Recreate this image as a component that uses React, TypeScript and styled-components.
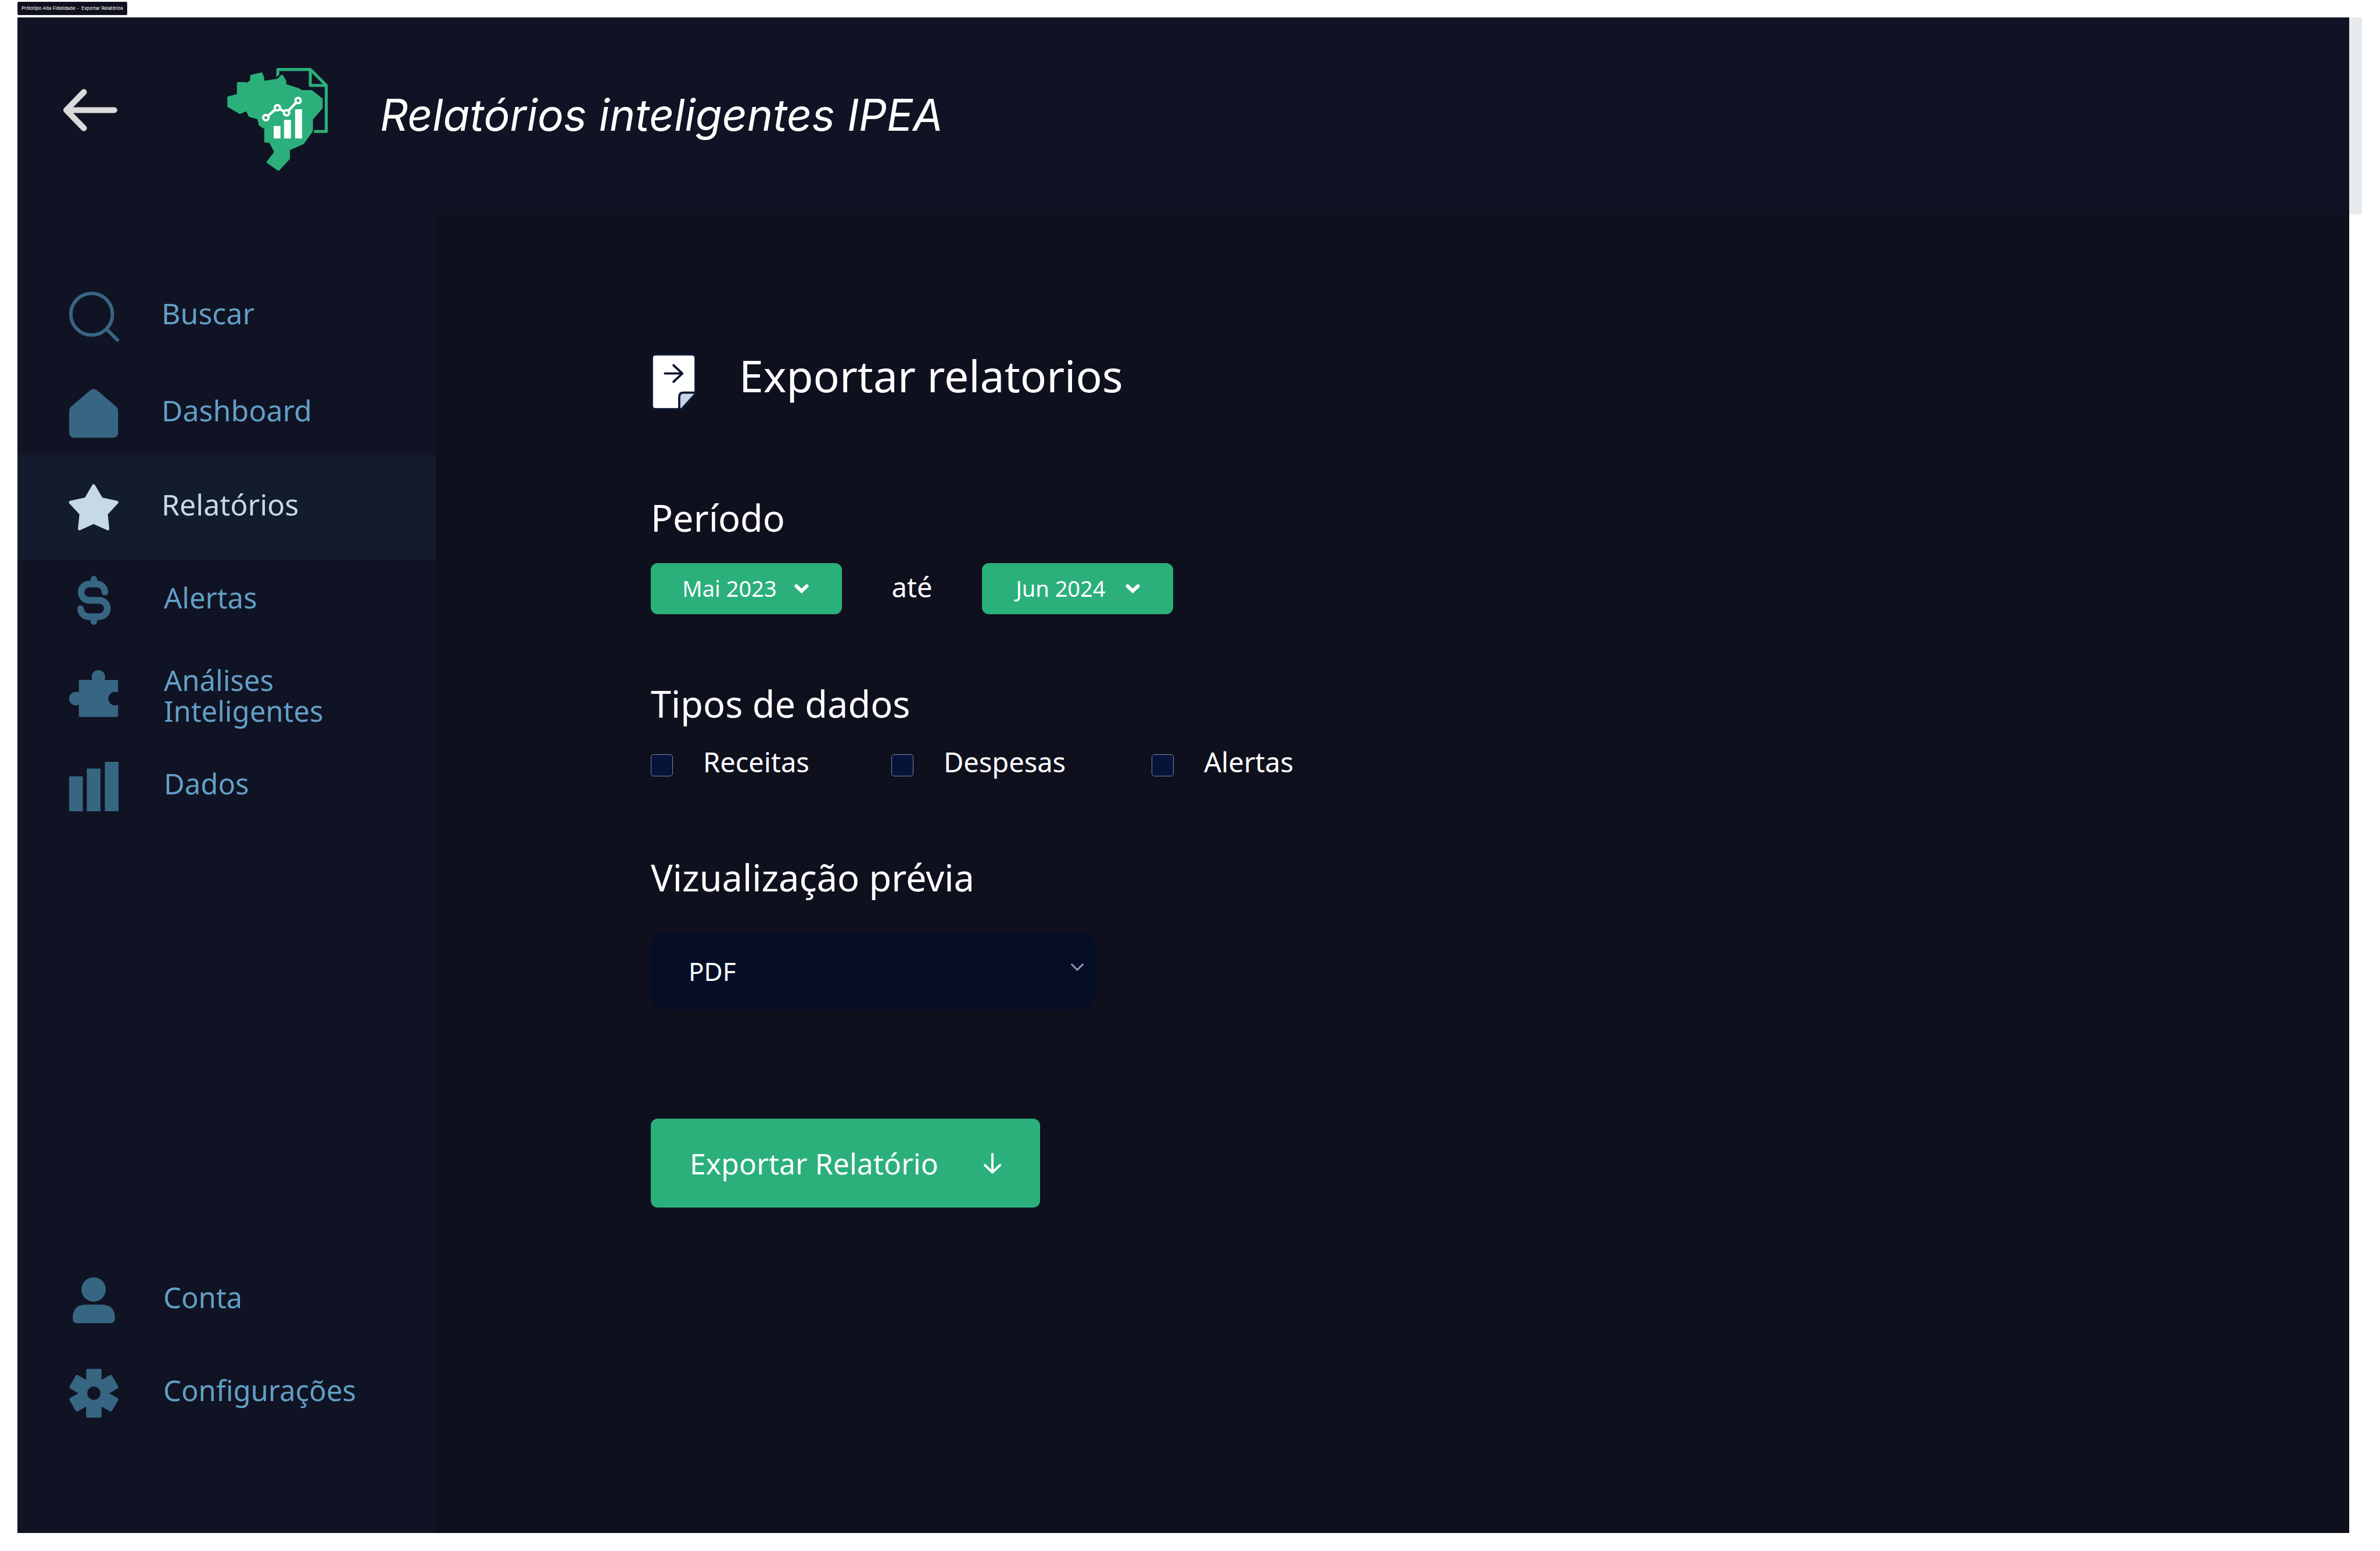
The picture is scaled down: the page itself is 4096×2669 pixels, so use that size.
import React from "react";
import styled, { createGlobalStyle } from "styled-components";

const color = {
  page: "#ffffff",
  main: "#0f101e",
  panel: "#101323",
  active: "#121c2e",
  green: "#2bb07b",
  nav: "#629fc6",
  navIcon: "#376683",
  navActive: "#c6d9e6",
  white: "#ffffff",
  field: "#060e26",
  box: "#071438",
  boxBorder: "#7986b0",
  ink: "#0b1730",
  fold: "#cbd5e1",
  edge: "#e6eaed",
  chevron: "#8f97bd",
};

const GlobalStyle = createGlobalStyle`
  * { box-sizing: border-box; }
  body {
    margin: 0;
    background: ${color.page};
    color: ${color.white};
    font-family: "Noto Sans", sans-serif;
  }
`;

const Page = styled.div`
  min-height: 100vh;
  display: flex;
  flex-direction: column;
  align-items: flex-start;
  gap: 4px;
  padding: 3px 31px 31px 30px;
`;

const FrameTag = styled.div`
  height: 23px;
  padding: 0 6px;
  border: 1px solid #2b2838;
  border-radius: 2px;
  background: ${color.main};
  font: 8px/20px Inter, sans-serif;
  white-space: pre;
`;

const Stage = styled.div`
  flex: 1;
  align-self: stretch;
  display: flex;
`;

const Shell = styled.div`
  flex: 1;
  display: flex;
  flex-direction: column;
  background: ${color.main};
`;

const HeaderEdge = styled.div`
  width: 22px;
  height: 339px;
  background: ${color.edge};
`;

const Header = styled.header`
  height: 339px;
  display: flex;
  align-items: center;
  padding-left: 78px;
  background: ${color.panel};
`;

const BackButton = styled.button`
  display: flex;
  margin: 0 189px 20px 0;
  padding: 0;
  border: 0;
  background: none;
  color: #dadada;
  cursor: pointer;
`;

const LogoBox = styled.div`
  display: flex;
  margin: 12px 90px 0 0;
`;

const AppTitle = styled.h1`
  margin: 0;
  padding-bottom: 4px;
  font: italic 400 75px/92px Inter, sans-serif;
`;

const Body = styled.div`
  flex: 1;
  display: flex;
`;

const Sidebar = styled.nav`
  width: 720px;
  display: flex;
  flex-direction: column;
  padding: 105px 0 171px;
  background: ${color.panel};
`;

const NavGroup = styled.ul<{ $gap: number; $labelGap: number; $size: number }>`
  margin: 0;
  padding: 0;
  list-style: none;
  display: flex;
  flex-direction: column;
  gap: ${(p) => p.$gap}px;
  font-size: ${(p) => p.$size}px;
  --label-gap: ${(p) => p.$labelGap}px;

  &:first-child { padding-bottom: 2px; }
  &:last-child { margin-top: auto; }
`;

const NavLink = styled.a<{ $active?: boolean }>`
  height: ${(p) => (p.$active ? 180 : 140)}px;
  display: flex;
  align-items: center;
  gap: var(--label-gap);
  padding-left: 89px;
  background: ${(p) => (p.$active ? color.active : "transparent")};
  color: ${(p) => (p.$active ? color.navActive : color.nav)};
  text-decoration: none;

  svg {
    flex: none;
    overflow: visible;
    color: ${(p) => (p.$active ? color.navActive : color.navIcon)};
  }
`;

const NavLabel = styled.span<{ $twoLines?: boolean }>`
  width: ${(p) => (p.$twoLines ? "300px" : "auto")};
  padding: ${(p) => (p.$twoLines ? "8px 0 0" : "0 0 9px")};
  line-height: 53px;
`;

const Main = styled.main`
  flex: 1;
  display: flex;
  flex-direction: column;
  align-items: flex-start;
  padding: 223px 0 0 370px;
`;

const PageHeading = styled.div`
  display: flex;
  align-items: flex-end;
  gap: 73px;
  height: 114px;
  margin-bottom: 142px;
`;

const PageTitle = styled.h2`
  margin: 0;
  padding-bottom: 8px;
  font-size: 75px;
  font-weight: 400;
  line-height: 104px;
`;

const Section = styled.section<{ $gap: number; $after: number }>`
  display: flex;
  flex-direction: column;
  gap: ${(p) => p.$gap}px;
  margin-bottom: ${(p) => p.$after}px;
`;

const SectionTitle = styled.h3`
  margin: 0;
  font-size: 63px;
  font-weight: 400;
  line-height: 86px;
`;

const PeriodRow = styled.div`
  display: flex;
  align-items: center;
`;

const Until = styled.span`
  width: 241px;
  padding-bottom: 6px;
  text-align: center;
  font-size: 47px;
  line-height: 66px;
`;

const SelectWrap = styled.div`
  position: relative;
  display: flex;
`;

const SelectChevron = styled.svg<{ $right: number; $top: number }>`
  position: absolute;
  right: ${(p) => p.$right}px;
  top: ${(p) => p.$top}px;
  overflow: visible;
  pointer-events: none;
`;

const MonthSelect = styled.select`
  width: 329px;
  height: 88px;
  padding: 0 58px 2px 0;
  border: 0;
  border-radius: 12px;
  appearance: none;
  background: ${color.green};
  color: ${color.white};
  font: 38px/52px "Noto Sans", sans-serif;
  text-align: center;
  text-align-last: center;
`;

const CheckRow = styled.div`
  display: grid;
  grid-template-columns: 414px 448px auto;
`;

const CheckLabel = styled.label`
  display: flex;
  align-items: center;
  gap: 52px;
  font-size: 47px;
  line-height: 66px;
`;

const CheckBox = styled.input`
  appearance: none;
  width: 38px;
  height: 38px;
  margin: 12px 0 0;
  border: 1px solid ${color.boxBorder};
  border-radius: 5px;
  background: ${color.box};

  &:checked { background: ${color.green}; }
`;

const FormatSelect = styled.select`
  width: 765px;
  height: 132px;
  padding: 0 65px;
  border: 0;
  border-radius: 24px;
  appearance: none;
  background: ${color.field};
  color: ${color.white};
  font: 44px/60px "Noto Sans", sans-serif;
`;

const ExportButton = styled.button`
  width: 670px;
  height: 153px;
  display: flex;
  align-items: center;
  justify-content: space-between;
  padding: 0 67px;
  border: 0;
  border-radius: 12px;
  background: ${color.green};
  color: ${color.white};
  font: 50px/68px "Noto Sans", sans-serif;
  cursor: pointer;
`;

const NavSvg = ({ children }: { children: React.ReactNode }) => (
  <svg width="85" height="85" viewBox="0 0 112 112" fill="currentColor" aria-hidden="true">
    {children}
  </svg>
);

const SearchIcon = () => (
  <NavSvg>
    <g fill="none" stroke="currentColor" strokeWidth="7.8" strokeLinecap="round">
      <circle cx="51" cy="51" r="47.2" />
      <path d="M84.500 84.500L109.500 109.500" />
    </g>
  </NavSvg>
);

const HomeIcon = () => (
  <NavSvg>
    <path d="M47 4Q55.500 -3.500 64 4L107 41Q111 45 111 51V99Q111 111 99 111H12Q0 111 0 99V51Q0 45 4 41Z" />
  </NavSvg>
);

const StarIcon = () => (
  <NavSvg>
    <path
      d="M55.500 6.500L73 36.500L108 44L84 70L87.500 104L55.500 89.500L23.500 104L27 70L3 44L38 36.500Z"
      stroke="currentColor"
      strokeWidth="7"
      strokeLinejoin="round"
    />
  </NavSvg>
);

const DollarIcon = () => (
  <NavSvg>
    <g fill="none" stroke="currentColor" strokeWidth="15" strokeLinecap="round">
      <path d="M81 37A18.500 18.500 0 0 0 63 18.500H45.500A18.300 18.300 0 0 0 45.500 55.300H68A18.600 18.600 0 0 1 68 92.500H45A18.500 18.500 0 0 1 26 74.500" />
      <path d="M56 7.500V18M56 93V103.500" />
    </g>
  </NavSvg>
);

const PuzzleIcon = () => (
  <NavSvg>
    <path d="M25 25H52.300A15.500 15.500 0 1 1 80.300 25H108Q111 25 111 28V53.500A15.500 15.500 0 1 0 111 81.500V106Q111 109 108 109H25Q22 109 22 106V81.500A15.500 15.500 0 1 1 22 53.500V28Q22 25 25 25Z" />
  </NavSvg>
);

const BarsIcon = () => (
  <NavSvg>
    <path d="M0 33H31V112H0ZM40 15H71V112H40ZM81 0H112V112H81Z" />
  </NavSvg>
);

const PersonIcon = () => (
  <NavSvg>
    <circle cx="55.500" cy="31.500" r="27.700" />
    <path d="M38 66H73Q104 66 104 97Q104 108 94 108H17Q8 108 8 97Q8 66 38 66Z" />
  </NavSvg>
);

const GearIcon = () => (
  <NavSvg>
    <mask id="gear-hole">
      <rect width="112" height="112" fill="#fff" />
      <circle cx="56" cy="56" r="15" fill="#000" />
    </mask>
    <g mask="url(#gear-hole)">
      {[0, 60, 120].map((angle) => (
        <rect
          key={angle}
          x="38.500"
          y="0.500"
          width="35"
          height="111"
          rx="4"
          transform={`rotate(${angle} 56 56)`}
        />
      ))}
    </g>
  </NavSvg>
);

const BackIcon = () => (
  <svg width="94" height="73" viewBox="0 0 124 96" fill="none" stroke="currentColor" strokeLinecap="round" strokeLinejoin="round" aria-hidden="true">
    <path d="M48 7L8 48L48 89M8 48H117" strokeWidth="13.5" />
  </svg>
);

const Logo = () => (
  <svg width="173" height="177" viewBox="102 72 681 696" role="img" aria-label="IPEA">
    <g fill={color.green}>
      <path
        fillRule="evenodd"
        d="M435 134V79Q436 73 442 72H670L783 185V506Q782 512 777 512H686Q692 504 692 492H763V200H662Q656 199 655 193V92H455V117ZM675 105V180H750Z"
      />
      <path d="M103 272Q103 266 109 264L168 249V174Q169 168 174 167H228L234 172L257 156V124Q258 120 264 118L332 102Q338 101 340 105L347 122L353 140V158L443 144L466 120Q473 114 480 121L502 157V180L528 190L594 211L607 221H676L749 279V344L683 420V499L621 586L527 628V688L455 765Q450 770 443 765L371 714Q367 710 370 705L420 640L387 577H360Q354 576 353 571V484L317 461L307 419L249 402L231 366L190 383Q187 384 184 382L106 336Q103 334 103 330Z" />
    </g>
    <path d="M417 464H463V549H417ZM487 423H534V549H487ZM562 351H609V549H562Z" fill="#fff" />
    <path d="M364 408L442 341L504 375L582 292" fill="none" stroke="#fff" strokeWidth="17" />
    <g fill={color.green} stroke="#fff" strokeWidth="16">
      <circle cx="364" cy="408" r="18" />
      <circle cx="442" cy="341" r="18" />
      <circle cx="504" cy="375" r="18" />
      <circle cx="582" cy="292" r="18" />
    </g>
  </svg>
);

const ExportIcon = () => (
  <svg width="79" height="98" viewBox="0 0 104 129" stroke={color.ink} strokeWidth="5" strokeLinejoin="round" aria-hidden="true">
    <path d="M11 2.500H93Q101.500 2.500 101.500 11V92L70 126.500H11Q2.500 126.500 2.500 118V11Q2.500 2.500 11 2.500Z" fill="#fff" />
    <path d="M64.500 126.500V99Q64.500 89 74 89H101.500V92L70 126.500Z" fill={color.fold} />
    <path d="M32 45.500H71M51.500 27L71.500 45.500L51.500 64.500" fill="none" strokeLinecap="round" />
  </svg>
);

const MonthField = ({ id, label, value }: { id: string; label: string; value: string }) => (
  <SelectWrap>
    <MonthSelect id={id} aria-label={label} defaultValue={value}>
      <option>{value}</option>
    </MonthSelect>
    <SelectChevron $right={57} $top={36} width="25" height="16" viewBox="0 0 25 16" fill="none" stroke="#fff" strokeWidth="6" strokeLinecap="round">
      <path d="M3.500 3.500L12.500 12L21.500 3.500" />
    </SelectChevron>
  </SelectWrap>
);

const findItems = [
  { label: "Buscar", Icon: SearchIcon },
  { label: "Dashboard", Icon: HomeIcon },
];
const dataItems = [
  { label: "Alertas", Icon: DollarIcon },
  { label: "Análises Inteligentes", Icon: PuzzleIcon, twoLines: true },
  { label: "Dados", Icon: BarsIcon },
];
const accountItems = [
  { label: "Conta", Icon: PersonIcon },
  { label: "Configurações", Icon: GearIcon },
];

type Item = { label: string; Icon: () => React.ReactElement; twoLines?: boolean; active?: boolean };

const NavItems = ({ items }: { items: Item[] }) => (
  <>
    {items.map(({ label, Icon, twoLines, active }) => (
      <li key={label}>
        <NavLink href="#" $active={active} aria-current={active ? "page" : undefined}>
          <Icon />
          <NavLabel $twoLines={twoLines}>{label}</NavLabel>
        </NavLink>
      </li>
    ))}
  </>
);

export default function App() {
  return (
    <Page>
      <GlobalStyle />
      <FrameTag>{"Prótotipo Alta Fidelidade -  Exportar Relatórios"}</FrameTag>
      <Stage>
        <Shell>
          <Header>
            <BackButton type="button" aria-label="Voltar">
              <BackIcon />
            </BackButton>
            <LogoBox>
              <Logo />
            </LogoBox>
            <AppTitle>Relatórios inteligentes IPEA</AppTitle>
          </Header>
          <Body>
            <Sidebar>
              <NavGroup $gap={27} $labelGap={74} $size={50}>
                <NavItems items={findItems} />
              </NavGroup>
              <NavGroup $gap={0} $labelGap={74} $size={50}>
                <NavItems items={[{ label: "Relatórios", Icon: StarIcon, active: true }]} />
              </NavGroup>
              <NavGroup $gap={20} $labelGap={78} $size={49}>
                <NavItems items={dataItems} />
              </NavGroup>
              <NavGroup $gap={20} $labelGap={77} $size={49}>
                <NavItems items={accountItems} />
              </NavGroup>
            </Sidebar>
            <Main>
              <PageHeading>
                <ExportIcon />
                <PageTitle>Exportar relatorios</PageTitle>
              </PageHeading>
              <Section $gap={35} $after={111}>
                <SectionTitle>Período</SectionTitle>
                <PeriodRow>
                  <MonthField id="from" label="Início do período" value="Mai 2023" />
                  <Until>até</Until>
                  <MonthField id="to" label="Fim do período" value="Jun 2024" />
                </PeriodRow>
              </Section>
              <Section $gap={24} $after={123}>
                <SectionTitle>Tipos de dados</SectionTitle>
                <CheckRow>
                  {["Receitas", "Despesas", "Alertas"].map((name) => (
                    <CheckLabel key={name}>
                      <CheckBox type="checkbox" />
                      {name}
                    </CheckLabel>
                  ))}
                </CheckRow>
              </Section>
              <Section $gap={52} $after={188}>
                <SectionTitle>
                  <label htmlFor="format">Vizualização prévia</label>
                </SectionTitle>
                <SelectWrap>
                  <FormatSelect id="format" defaultValue="PDF">
                    <option>PDF</option>
                  </FormatSelect>
                  <SelectChevron $right={20} $top={53} width="22" height="13" viewBox="0 0 22 13" fill="none" stroke={color.chevron} strokeWidth="3" strokeLinecap="round">
                    <path d="M1.500 1.500L11 11L20.500 1.500" />
                  </SelectChevron>
                </SelectWrap>
              </Section>
              <ExportButton type="button">
                Exportar Relatório
                <svg width="30" height="36" viewBox="0 0 30 36" fill="none" stroke="#fff" strokeWidth="4" strokeLinecap="round" strokeLinejoin="round" aria-hidden="true">
                  <path d="M15 2V33M2 21L15 33.500L28 21" />
                </svg>
              </ExportButton>
            </Main>
          </Body>
        </Shell>
        <HeaderEdge />
      </Stage>
    </Page>
  );
}
